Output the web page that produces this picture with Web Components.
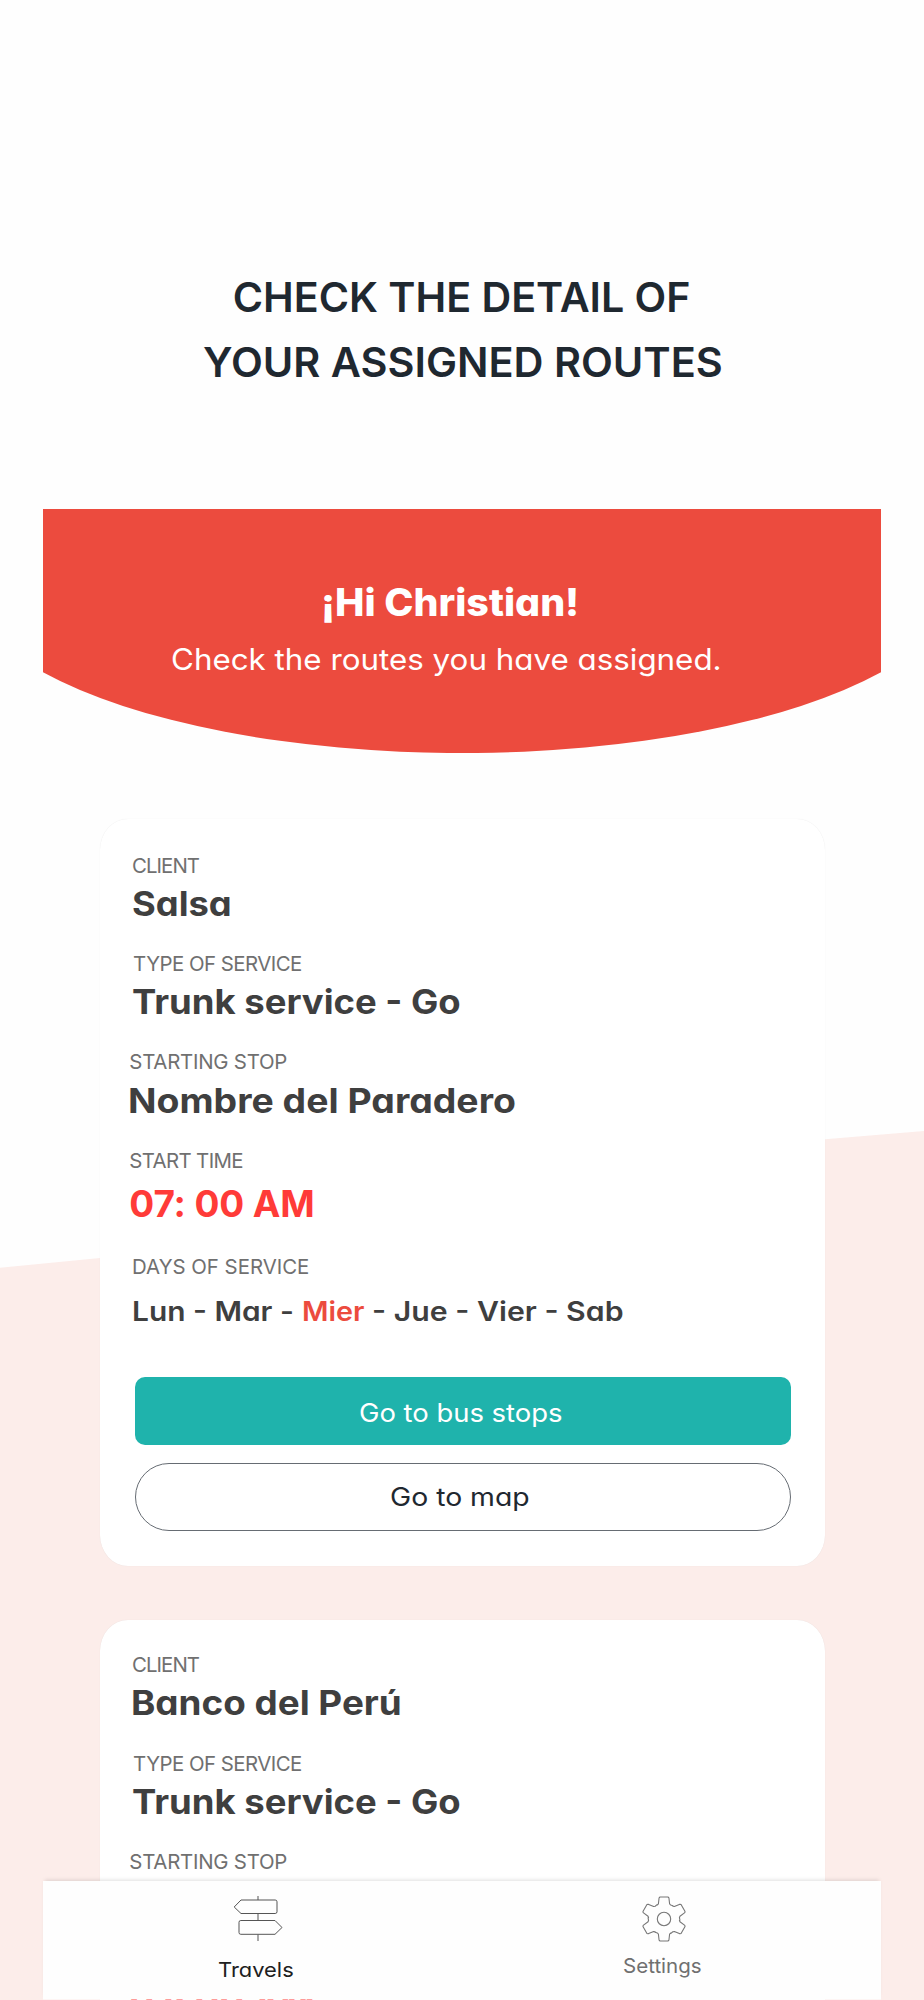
<!DOCTYPE html>
<html lang="en">
<head>
<meta charset="utf-8">
<title>Assigned routes</title>
<style>
html,body{margin:0;padding:0}
body{width:924px;height:2000px;overflow:hidden;background:#fefefe;font-family:Inter,"Open Sans",sans-serif;font-feature-settings:"cv11" 1}
</style>
</head>
<body>
<routes-page></routes-page>
<script>
// A single line of text whose visible ink spans the width in "w":
// short lines are widened, long ones are tracked tighter.
const ctx = document.createElement('canvas').getContext('2d');
class FitText extends HTMLElement {
  connectedCallback() {
    if (this.shadowRoot) return;
    this.attachShadow({mode:'open'}).innerHTML = `<style>
      :host{display:block;white-space:nowrap;flex:none}
      span{display:inline-block;line-height:inherit;vertical-align:top;transform-origin:0 50%}
    </style><span><slot></slot></span>`;
    const w = parseFloat(this.getAttribute('w'));
    const span = this.shadowRoot.querySelector('span');
    const cs = getComputedStyle(this), text = this.textContent.trim();
    ctx.font = `${cs.fontWeight} ${cs.fontSize} ${cs.fontFamily}`;
    const m = ctx.measureText(text);
    const lsb = -m.actualBoundingBoxLeft, rsb = m.width - m.actualBoundingBoxRight;
    const ink = span.getBoundingClientRect().width - lsb - rsb;
    this.style.width = w + 'px';
    let k = 1;
    if (w > ink) {
      k = w / ink;
      span.style.transform = `scaleX(${k})`;
    } else {
      span.style.letterSpacing = (w - ink) / (text.length - 1) + 'px';
    }
    span.style.marginLeft = -lsb * k + 'px';
  }
}
customElements.define('fit-text', FitText);

class PageTitle extends HTMLElement {
  connectedCallback() {
    this.attachShadow({mode:'open'}).innerHTML = `<style>
      :host{display:flex;flex-direction:column;align-items:center;height:243.8px;padding-top:265.2px;
        font-size:41.2px;line-height:65px;font-weight:600;color:#1f2830}
    </style>
    <fit-text w="454.5">CHECK THE DETAIL OF</fit-text>
    <fit-text w="517">YOUR ASSIGNED ROUTES</fit-text>`;
  }
}
customElements.define('page-title', PageTitle);

class WelcomeBanner extends HTMLElement {
  connectedCallback() {
    this.attachShadow({mode:'open'}).innerHTML = `<style>
      :host{display:grid;margin:0 42.7px 0 43.3px;height:244px;color:#fff}
      svg,.copy{grid-area:1/1}
      svg{display:block;width:838px;height:244px}
      .copy{padding-top:69px}
      .hi{font-size:37.6px;font-weight:800;line-height:50px;margin-left:281px}
      .sub{font-size:29.3px;font-weight:400;line-height:40px;margin:12.5px 0 0 128.5px}
    </style>
    <svg viewBox="0 0 838 244"><path fill="#ec4b3e" d="M0 0H838V163.2A500 178 0 0 1 0 163.2Z"/></svg>
    <div class="copy"><fit-text class="hi" w="252.5">¡Hi Christian!</fit-text>
    <fit-text class="sub" w="548">Check the routes you have assigned.</fit-text></div>`;
  }
}
customElements.define('welcome-banner', WelcomeBanner);

class RouteField extends HTMLElement {
  connectedCallback() {
    this.attachShadow({mode:'open'}).innerHTML = `<style>
      :host{display:block;height:98.4px;padding-left:33.6px;color:#3f3f3f}
      :host([outdent]){padding-left:30.8px}
      :host([kind=time]){height:106px}
      :host([kind=days]){height:123.7px}
      .label{font-size:20.4px;line-height:26px;color:#707070;margin-bottom:3.2px}
      .value{display:block;font-size:33.6px;line-height:44px;font-weight:700}
      :host([kind=time]) .value{font-size:37px;line-height:50px;color:#ff3b38;margin-top:5.2px}
      :host([kind=days]) .value{font-size:27px;line-height:40px;font-weight:600;margin-top:11.9px}
    </style>
    <fit-text class="label" w="${this.getAttribute('lw')}">${this.getAttribute('label')}</fit-text>
    <div class="value"><slot></slot></div>`;
  }
}
customElements.define('route-field', RouteField);

class RouteButton extends HTMLElement {
  connectedCallback() {
    this.attachShadow({mode:'open'}).innerHTML = `<style>
      :host{display:flex;box-sizing:border-box;justify-content:center;align-items:center;height:67.7px;
        margin:0 33.8px 0 35.2px;font-size:25.3px;line-height:34px}
      :host([primary]){background:#1fb3ac;color:#fff;border-radius:10px;padding:3px 4px 0 0;margin-bottom:18.3px}
      :host([outline]){border:1px solid #666c73;color:#1f2830;border-radius:34px;padding-right:5px}
    </style><slot></slot>`;
  }
}
customElements.define('route-button', RouteButton);

class RouteCard extends HTMLElement {
  connectedCallback() {
    this.attachShadow({mode:'open'}).innerHTML = `<style>
      :host{display:block;box-sizing:border-box;width:725.5px;height:747px;margin-left:99.5px;
        padding-top:33.6px;background:#fff;border-radius:28px/31px;box-shadow:0 0 1px rgba(0,0,0,.10)}
      :host(:nth-of-type(2)){padding-top:32.3px}
      .days{display:flex}
      .today{color:#ec4b3e;margin:0 9px 0 10.5px}
    </style>
    <route-field label="CLIENT" lw="66.7"><fit-text w="${this.getAttribute('cw')}">${this.getAttribute('client')}</fit-text></route-field>
    <route-field label="TYPE OF SERVICE" lw="168"><fit-text w="327">Trunk service - Go</fit-text></route-field>
    <route-field outdent label="STARTING STOP" lw="156"><fit-text w="385">Nombre del Paradero</fit-text></route-field>
    <route-field outdent kind="time" label="START TIME" lw="112"><fit-text w="183">07: 00 AM</fit-text></route-field>
    <route-field kind="days" label="DAYS OF SERVICE" lw="175"><div class="days"><fit-text w="159">Lun - Mar -</fit-text><fit-text class="today" w="61.7">Mier</fit-text><fit-text w="249.5">- Jue - Vier - Sab</fit-text></div></route-field>
    <route-button primary><fit-text w="202">Go to bus stops</fit-text></route-button>
    <route-button outline><fit-text w="138">Go to map</fit-text></route-button>`;
  }
}
customElements.define('route-card', RouteCard);

class NavItem extends HTMLElement {
  connectedCallback() {
    this.attachShadow({mode:'open'}).innerHTML = `<style>
      :host{display:flex;flex-direction:column;align-items:center;font-size:20.2px;line-height:28px}
      .icon{height:46px;margin-bottom:14px}
      :host([muted]) .icon{margin-bottom:10px}
    </style><div class="icon"><slot name="icon"></slot></div><slot></slot>`;
  }
}
customElements.define('nav-item', NavItem);

class BottomNav extends HTMLElement {
  connectedCallback() {
    this.attachShadow({mode:'open'}).innerHTML = `<style>
      :host{position:absolute;left:43px;top:1881px;width:838px;height:119px;box-sizing:border-box;
        display:flex;padding:15px 0 0 175px;gap:331px;background:#fefefe;background-clip:padding-box;
        border-bottom:1px solid rgba(254,254,254,.5);box-shadow:0 -3px 4px -2px rgba(0,0,0,.13)}
      svg{display:block;fill:none;stroke-linejoin:round}
      .travel{color:#202020}
      .set{color:#707070}
    </style>
    <nav-item class="travel">
      <svg slot="icon" width="50" height="46" viewBox="231 1896 50 46" stroke="#555" stroke-width="1">
        <path d="M258 1896v4M258 1913.5v7M258 1934.5v6.5M241 1900h34.2q1.8 0 1.8 1.8v10q0 1.7-1.8 1.7H241l-6.8-6.5ZM275 1920.5h-34.2q-1.8 0-1.8 1.8v10.2q0 1.8 1.8 1.8H275l7-6.8Z" style="overflow:visible"/>
      </svg>
      <fit-text w="75">Travels</fit-text>
    </nav-item>
    <nav-item class="set" muted>
      <svg slot="icon" width="46" height="46" viewBox="640 1895.5 46 46" stroke="#777" stroke-width="1.1">
        <circle cx="664" cy="1918.5" r="6.7"/>
        <path id="gear"/>
      </svg>
      <fit-text w="77">Settings</fit-text>
    </nav-item>`;
    this.shadowRoot.querySelectorAll('svg').forEach(s => s.style.overflow = 'visible');
    // Six identical teeth, one every 60 degrees around the hub.
    const tooth = [[-6.6,-14],[-5.6,-15.2],[-4.9,-21.2],[-4,-22],[4,-22],[4.9,-21.2],[5.6,-15.2],[6.6,-14],[9,-13.2]];
    let d = '';
    for (let i = 0; i < 6; i++) {
      const a = i * Math.PI / 3, c = Math.cos(a), s = Math.sin(a);
      for (const [x, y] of tooth)
        d += (d ? 'L' : 'M') + (664 + x * c - y * s).toFixed(2) + ' ' + (1918.5 + x * s + y * c).toFixed(2);
    }
    this.shadowRoot.getElementById('gear').setAttribute('d', d + 'Z');
  }
}
customElements.define('bottom-nav', BottomNav);

class RoutesPage extends HTMLElement {
  connectedCallback() {
    this.attachShadow({mode:'open'}).innerHTML = `<style>
      :host{display:block;position:relative;width:924px;height:2000px;overflow:hidden}
      .wave{position:absolute;left:0;top:1125px}
      .content{position:relative}
      .cards{display:flex;flex-direction:column;gap:54px;padding-top:66px}
    </style>
    <svg class="wave" width="924" height="875" viewBox="0 1125 924 875"><path fill="#fcedea" d="M0 1267.8L100 1258C350 1232 600 1162 825 1139.3L924 1131V2000H0Z"/></svg>
    <div class="content">
      <page-title></page-title>
      <welcome-banner></welcome-banner>
      <div class="cards">
        <route-card client="Salsa" cw="97"></route-card>
        <route-card client="Banco del Perú" cw="266.5"></route-card>
      </div>
    </div>
    <bottom-nav></bottom-nav>`;
  }
}
customElements.define('routes-page', RoutesPage);
</script>
</body>
</html>
